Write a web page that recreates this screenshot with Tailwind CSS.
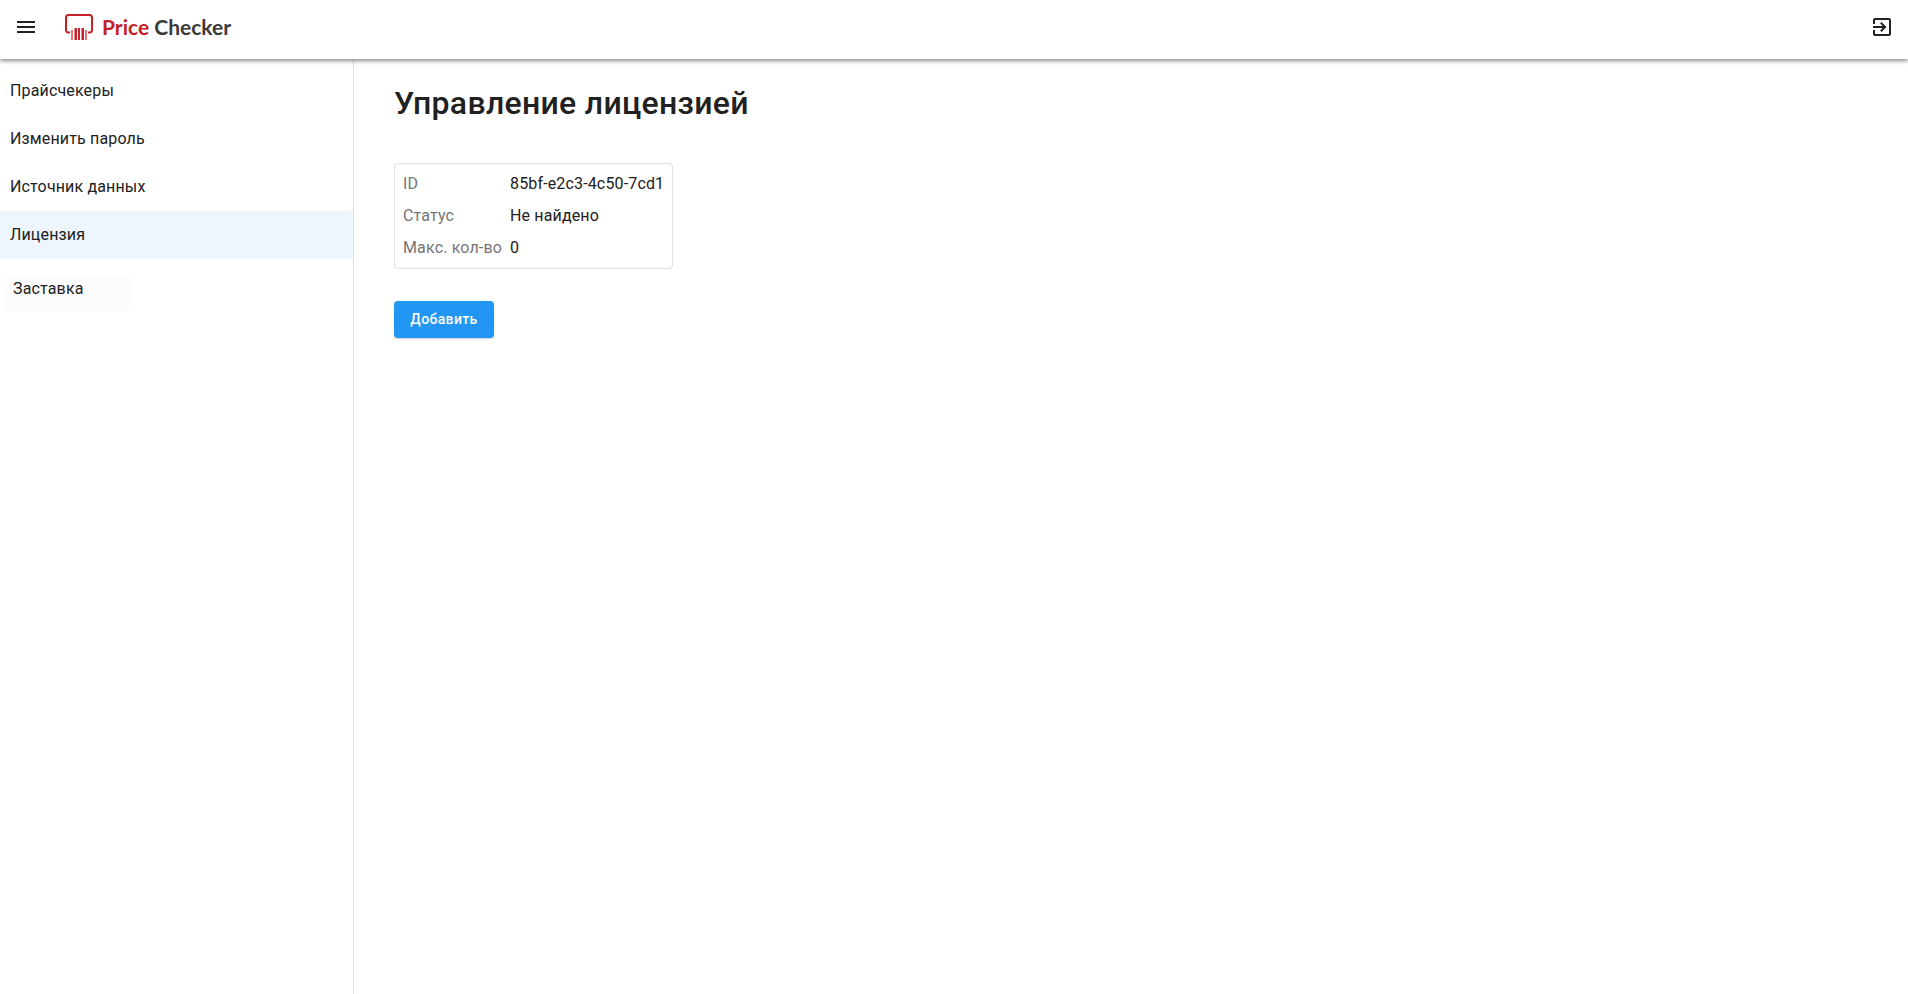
<!DOCTYPE html>
<html lang="ru">
<head>
    <meta charset="UTF-8">
    <meta name="viewport" content="width=device-width, initial-scale=1.0">
    <script src="https://cdn.jsdelivr.net/npm/@tailwindcss/browser@4"></script>
    <title>Price Checker</title>
</head>

<body class="h-[994px] overflow-hidden flex flex-col bg-white font-['Roboto',sans-serif] text-[#212121]">
    <header class="relative z-10 h-[59px] shrink-0 flex items-center justify-between bg-white shadow-[0_2px_4px_rgba(0,0,0,0.45)]">
        <div class="flex items-center pb-[5px]">
            <button class="ml-[14px] w-6 h-6 flex items-center justify-center">
                <svg width="24" height="24" viewBox="0 0 24 24" fill="#212121"><path d="M3 18h18v-2H3v2zm0-5h18v-2H3v2zm0-7v2h18V6H3z"/></svg>
            </button>
            <svg class="ml-[27px] mt-[1px]" width="28" height="27" viewBox="0 0 28 27" fill="none">
                <path d="M5 18.500H3.500Q1 18.500 1 16V3.500Q1 1 3.500 1H24.500Q27 1 27 3.500V16Q27 18.500 24.500 18.500H23" stroke="#c62128" stroke-width="2"/>
                <path d="M6 16h2v10H6zM20 16h2v10h-2z" fill="#e2787c"/>
                <path d="M9.500 14h2.500v12H9.500zM13 14h2v12h-2zM16.500 14h2.500v12h-2.500z" fill="#c62128"/>
            </svg>
            <span class="ml-[9px] font-['Lato',sans-serif] font-bold text-[21px] leading-7 text-[#3a3a3a]"><span class="text-[#c62128]">Price</span> Checker</span>
        </div>
        <button class="mr-[14px] mb-[5px] w-6 h-6">
            <svg width="24" height="24" viewBox="0 0 24 24" fill="#212121"><path d="M10.090 15.590 11.500 17l5-5-5-5-1.410 1.410L12.670 11H3v2h9.670l-2.580 2.590zM19 3H5c-1.110 0-2 .9-2 2v4h2V5h14v14H5v-4H3v4c0 1.100.89 2 2 2h14c1.100 0 2-.9 2-2V5c0-1.100-.9-2-2-2z"/></svg>
        </button>
    </header>

    <div class="flex flex-1 min-h-0">
        <aside class="w-[354px] shrink-0 border-r border-[#e0e0e0] pt-2 text-[16px] tracking-[0.15px]">
            <a class="h-12 flex items-center pl-[10px]">Прайсчекеры</a>
            <a class="h-12 flex items-center pl-[10px]">Изменить пароль</a>
            <a class="h-12 flex items-center pl-[10px]">Источник данных</a>
            <a class="h-12 flex items-center pl-[10px] bg-[#edf5fd]">Лицензия</a>
            <a class="mt-[16px] ml-[5px] w-[125px] h-[36px] flex items-center pl-[8px] pb-[9px] bg-[#fcfcfc]">Заставка</a>
        </aside>

        <main class="flex-1 pl-[40px]">
            <h1 class="mt-[24px] text-[32px] leading-10 font-medium tracking-[0.3px]">Управление лицензией</h1>
            <table class="mt-[40px] block w-[279px] h-[106px] border border-[#e0e0e0] rounded-[4px] pl-2 pt-1 text-[16px] leading-[32px] tracking-[0.15px]">
                <tbody>
                    <tr><td class="pr-2 text-[#757575]">ID</td><td>85bf-e2c3-4c50-7cd1</td></tr>
                    <tr><td class="pr-2 text-[#757575]">Статус</td><td>Не найдено</td></tr>
                    <tr><td class="pr-2 text-[#757575]">Макс. кол-во</td><td>0</td></tr>
                </tbody>
            </table>
            <button class="mt-[32px] block w-[100px] h-[37px] rounded-[4px] bg-[#2196f3] text-white text-[14px] font-medium tracking-[0.35px] shadow-[0_1px_2px_rgba(0,0,0,0.2)]">Добавить</button>
        </main>
    </div>
</body>
</html>
